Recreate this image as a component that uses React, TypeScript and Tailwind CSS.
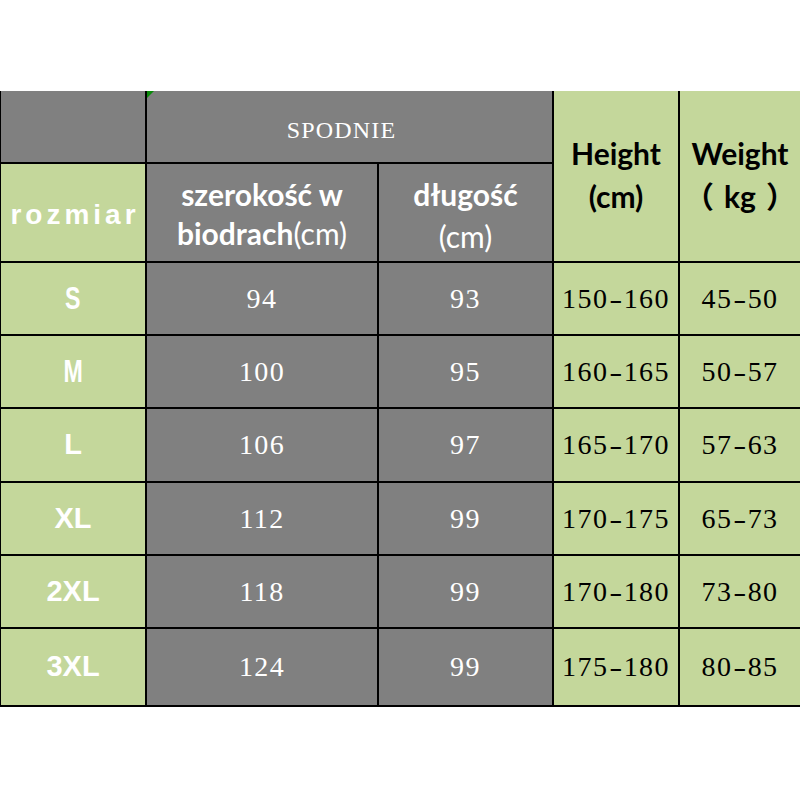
import React from "react";

const G = "bg-[#c4d79b]";
const D = "bg-[#808080]";

const rows: [string, string, string, string, string][] = [
  ["S", "94", "93", "150-160", "45-50"],
  ["M", "100", "95", "160-165", "50-57"],
  ["L", "106", "97", "165-170", "57-63"],
  ["XL", "112", "99", "170-175", "65-73"],
  ["2XL", "118", "99", "170-180", "73-80"],
  ["3XL", "124", "99", "175-180", "80-85"],
];

const num = "font-['Liberation_Serif',serif] text-[28px] leading-none tracking-[1.4px]";
const hdr = "font-['Lato','Noto_Sans_CJK_SC',sans-serif] font-bold text-[30px]";

function Range({ v }: { v: string }) {
  const [a, b] = v.split("-");
  return (
    <span className="inline-flex items-center">
      {a}
      <span className="inline-block w-[9.4px] mx-[3px] text-center scale-x-[1.4] tracking-normal">-</span>
      {b}
    </span>
  );
}

export default function App() {
  return (
    <div className="w-[800px] h-[800px] bg-white pt-[91px] overflow-hidden">
      <div className="grid grid-cols-[144px_230px_173px_124px_120px] grid-rows-[71px_97px_71px_71px_72px_71px_71px_76px] gap-[2px] bg-black pl-[1px] pb-[2px]">
        <div className={D} />
        <div className={`${D} col-span-2 relative flex items-center justify-center pt-[6px] pr-4 text-white font-['Liberation_Serif',serif] text-[24px] tracking-[1.2px] leading-none`}>
          <div className="absolute left-0 top-0 w-0 h-0 border-t-[7px] border-r-[7px] border-t-[#0a8a0a] border-r-transparent" />
          SPODNIE
        </div>
        <div className={`${G} row-span-2 flex flex-col items-center justify-center text-black ${hdr} leading-[43px] pb-[2px]`}>
          <span>Height</span>
          <span>(cm)</span>
        </div>
        <div className={`${G} row-span-2 flex flex-col items-center justify-center text-black ${hdr} leading-[43px] pb-[2px]`}>
          <span>Weight</span>
          <span className="inline-flex items-center">
            <span className="mr-[10px]">（</span>
            <span>kg</span>
            <span className="ml-[10px]">）</span>
          </span>
        </div>
        <div className={`${G} flex items-center justify-center pt-[4px] text-white font-['Liberation_Sans',sans-serif] font-bold text-[28px] tracking-[4px] pl-[4px]`}>
          rozmiar
        </div>
        <div className={`${D} flex flex-col items-center justify-center text-white ${hdr} leading-[39px] pt-[2px]`}>
          <span>szerokość w</span>
          <span>
            biodrach<span className="font-normal">(cm)</span>
          </span>
        </div>
        <div className={`${D} flex flex-col items-center justify-center text-white ${hdr} leading-[42px] pt-[4px]`}>
          <span>długość</span>
          <span className="font-normal">(cm)</span>
        </div>
        {rows.map((r) => (
          <React.Fragment key={r[0]}>
            <div className={`${G} flex items-center justify-center text-white font-['Liberation_Sans',sans-serif] font-bold text-[29px]`}>
              <span className={r[0] === "M" || r[0] === "S" ? "inline-block scale-x-[0.8] scale-y-110" : ""}>{r[0]}</span>
            </div>
            <div className={`${D} flex items-center justify-center text-white ${num}`}>{r[1]}</div>
            <div className={`${D} flex items-center justify-center text-white ${num}`}>{r[2]}</div>
            <div className={`${G} flex items-center justify-center text-black ${num}`}>
              <Range v={r[3]} />
            </div>
            <div className={`${G} flex items-center justify-center text-black ${num}`}>
              <Range v={r[4]} />
            </div>
          </React.Fragment>
        ))}
      </div>
    </div>
  );
}
